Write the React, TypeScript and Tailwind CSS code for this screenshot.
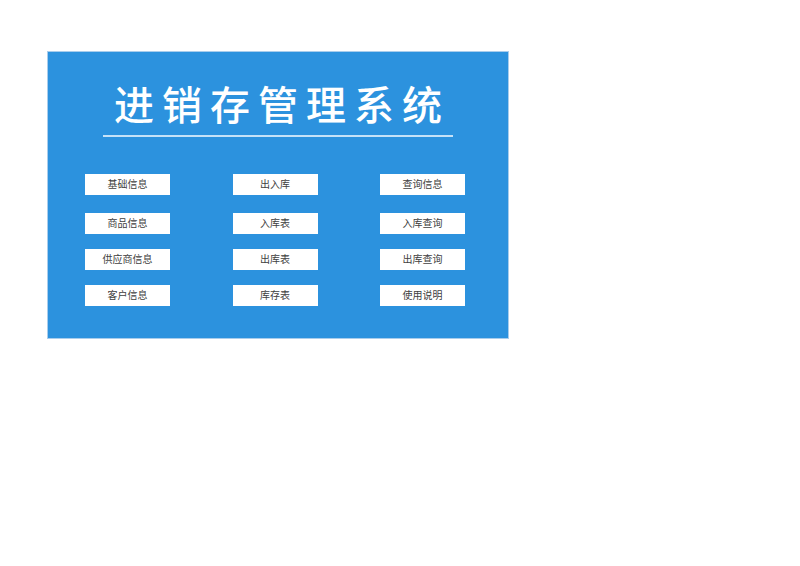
interface MenuColumn {
  title: string;
  items: string[];
}

const SYSTEM_NAME = '进销存管理系统';

const columns: MenuColumn[] = [
  { title: '基础信息', items: ['商品信息', '供应商信息', '客户信息'] },
  { title: '出入库', items: ['入库表', '出库表', '库存表'] },
  { title: '查询信息', items: ['入库查询', '出库查询', '使用说明'] },
];

function MenuButton({ label }: { label: string }) {
  return (
    <button
      type="button"
      className="flex h-[21px] w-full cursor-pointer items-center justify-center bg-white pb-px text-[10px] leading-none text-[#404040]"
    >
      {label}
    </button>
  );
}

export default function App() {
  return (
    <main className="min-h-screen bg-white px-[47px] py-[51px] font-['Microsoft_YaHei','Noto_Sans_CJK_SC',sans-serif]">
      <section className="w-full max-w-[462px] border border-[#a9cdec] bg-[#2c92de] pb-8">
        {/* Title */}
        <header className="mx-[55px] flex h-[85px] items-end justify-center border-b-2 border-[#c5e2f8] pb-3">
          <h1 className="flex gap-2 font-['KaiTi','Noto_Sans_CJK_SC',sans-serif] text-[40px] leading-none font-medium text-white">
            {SYSTEM_NAME.split('').map((char) => (
              <span key={char}>{char}</span>
            ))}
          </h1>
        </header>

        {/* Menu */}
        <nav className="mt-[37px] flex justify-between pr-[43px] pl-[37px]">
          {columns.map((column) => (
            <div key={column.title} className="w-[85px]">
              <MenuButton label={column.title} />
              <div className="mt-[18px] flex flex-col gap-[15px]">
                {column.items.map((item) => (
                  <MenuButton key={item} label={item} />
                ))}
              </div>
            </div>
          ))}
        </nav>
      </section>
    </main>
  );
}
